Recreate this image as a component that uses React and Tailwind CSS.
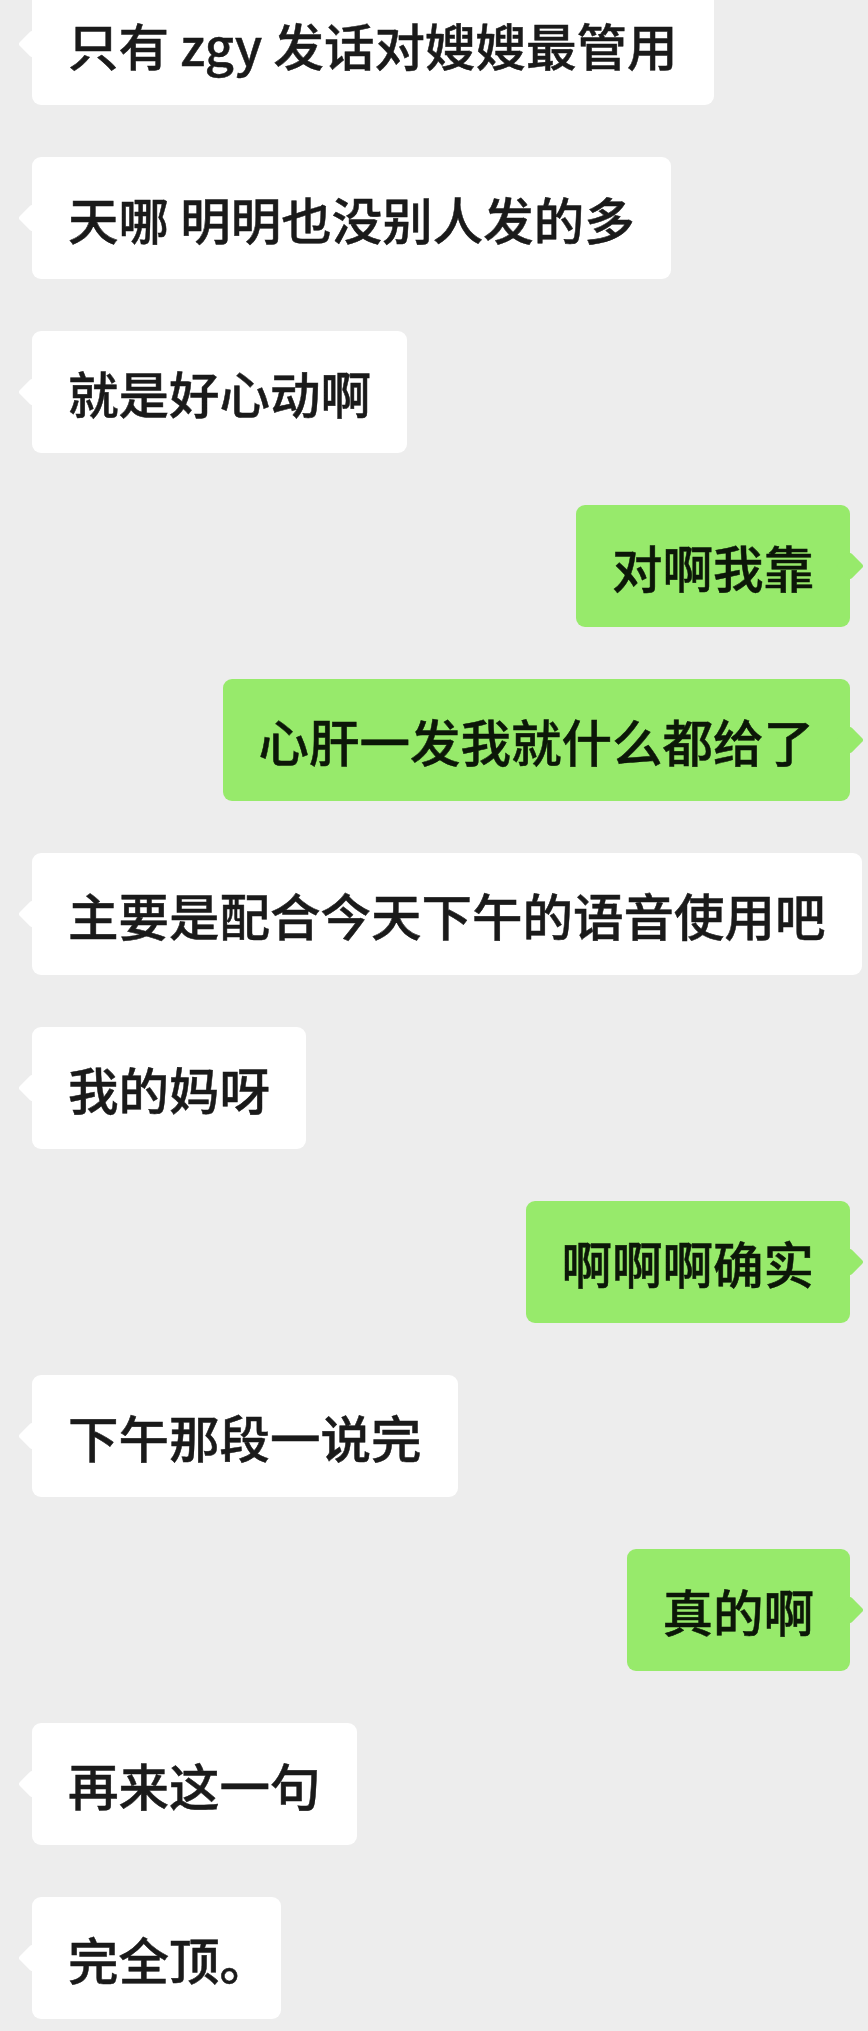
import React from "react";

const messages = [
  { side: "l", text: "只有 zgy 发话对嫂嫂最管用" },
  { side: "l", text: "天哪 明明也没别人发的多" },
  { side: "l", text: "就是好心动啊" },
  { side: "r", text: "对啊我靠" },
  { side: "r", text: "心肝一发我就什么都给了" },
  { side: "l", text: "主要是配合今天下午的语音使用吧" },
  { side: "l", text: "我的妈呀" },
  { side: "r", text: "啊啊啊确实" },
  { side: "l", text: "下午那段一说完" },
  { side: "r", text: "真的啊" },
  { side: "l", text: "再来这一句" },
  { side: "l", text: "完全顶", tail: "。" },
];

function Bubble({ m }) {
  const left = m.side === "l";
  const bg = left ? "bg-white" : "bg-[#97ea6b]";
  return (
    <div
      className={
        "relative shrink-0 h-[122px] flex items-center px-[36px] rounded-[9px] whitespace-nowrap text-[50.5px] font-medium " +
        bg +
        (left ? " text-[#1a1a1a]" : " text-[#0c1708]")
      }
    >
      <span
        className={
          "absolute top-1/2 w-[20px] h-[20px] rounded-[3px] -translate-y-1/2 rotate-45 " +
          bg +
          (left ? " left-0 -translate-x-1/2" : " right-0 translate-x-1/2")
        }
      />
      <span className="relative leading-none [-webkit-text-stroke:0.5px_currentColor]">
        {m.text}
        {m.tail ? <span className="tracking-[-25px]">{m.tail}</span> : null}
      </span>
    </div>
  );
}

export default function App() {
  return (
    <div
      className="min-h-[2031px] h-[2031px] overflow-hidden bg-[#ededed]"
      style={{ fontFamily: '"Noto Sans CJK SC", "Noto Sans", sans-serif' }}
    >
      <div className="flex flex-col gap-[52px] -mt-[17px]">
        {messages.map((m, i) => (
          <div
            key={i}
            className={
              m.side === "l"
                ? "flex justify-start pl-[32px]"
                : "flex justify-end pr-[18px]"
            }
          >
            <Bubble m={m} />
          </div>
        ))}
      </div>
    </div>
  );
}
